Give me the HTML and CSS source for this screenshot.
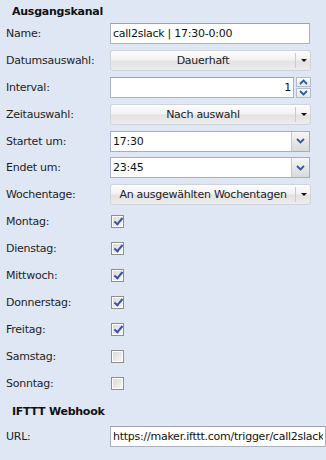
FILE: index.html
```html
<!DOCTYPE html>
<html lang="de">

<head>
    <meta charset="UTF-8">
    <meta name="viewport" content="width=device-width, initial-scale=1.0">
    <title>Ausgangskanal</title>
    <link rel="stylesheet" href="styles.css">
</head>

<body>
    <form class="panel">
        <h3 class="section-title">Ausgangskanal</h3>

        <div class="row">
            <label class="row-label">Name:</label>
            <input class="field" type="text" value="call2slack | 17:30-0:00">
        </div>

        <div class="row">
            <label class="row-label">Datumsauswahl:</label>
            <div class="dropdown" role="button"><span class="dropdown-text">Dauerhaft</span><span class="dropdown-arrow"></span></div>
        </div>

        <div class="row">
            <label class="row-label">Interval:</label>
            <div class="spinner">
                <input class="field spinner-input" type="text" value="1">
                <div class="spinner-btns">
                    <span class="spin spin-up">
                        <svg width="9" height="6" viewBox="0 0 9 6"><path d="M1 5 L4.5 1.5 L8 5" fill="none" stroke="#2f5aa8" stroke-width="1.8"/></svg>
                    </span>
                    <span class="spin spin-down">
                        <svg width="9" height="6" viewBox="0 0 9 6"><path d="M1 1 L4.5 4.5 L8 1" fill="none" stroke="#2f5aa8" stroke-width="1.8"/></svg>
                    </span>
                </div>
            </div>
        </div>

        <div class="row">
            <label class="row-label">Zeitauswahl:</label>
            <div class="dropdown" role="button"><span class="dropdown-text">Nach auswahl</span><span class="dropdown-arrow"></span></div>
        </div>

        <div class="row">
            <label class="row-label">Startet um:</label>
            <div class="combo">
                <input class="combo-input" type="text" value="17:30">
                <span class="combo-btn">
                    <svg width="9" height="6" viewBox="0 0 9 6"><path d="M1 1 L4.5 4.5 L8 1" fill="none" stroke="#2f5aa8" stroke-width="1.8"/></svg>
                </span>
            </div>
        </div>

        <div class="row">
            <label class="row-label">Endet um:</label>
            <div class="combo">
                <input class="combo-input" type="text" value="23:45">
                <span class="combo-btn">
                    <svg width="9" height="6" viewBox="0 0 9 6"><path d="M1 1 L4.5 4.5 L8 1" fill="none" stroke="#2f5aa8" stroke-width="1.8"/></svg>
                </span>
            </div>
        </div>

        <div class="row">
            <label class="row-label">Wochentage:</label>
            <div class="dropdown" role="button"><span class="dropdown-text">An ausgewählten Wochentagen</span><span class="dropdown-arrow"></span></div>
        </div>

        <div class="row">
            <label class="row-label">Montag:</label>
            <span class="check on"></span>
        </div>
        <div class="row">
            <label class="row-label">Dienstag:</label>
            <span class="check on"></span>
        </div>
        <div class="row">
            <label class="row-label">Mittwoch:</label>
            <span class="check on"></span>
        </div>
        <div class="row">
            <label class="row-label">Donnerstag:</label>
            <span class="check on"></span>
        </div>
        <div class="row">
            <label class="row-label">Freitag:</label>
            <span class="check on"></span>
        </div>
        <div class="row">
            <label class="row-label">Samstag:</label>
            <span class="check"></span>
        </div>
        <div class="row">
            <label class="row-label">Sonntag:</label>
            <span class="check"></span>
        </div>

        <h3 class="section-title section-title-2">IFTTT Webhook</h3>

        <div class="row">
            <label class="row-label">URL:</label>
            <input class="field field-wide" type="text" value="https://maker.ifttt.com/trigger/call2slack">
        </div>
    </form>
</body>

</html>
```

FILE: styles.css
```css
html,
body {
    margin: 0;
    padding: 0;
}

body {
    background: #dfe7f5;
    font-family: "DejaVu Sans", Verdana, sans-serif;
    font-size: 11px;
    letter-spacing: -0.25px;
    color: #1e1e1e;
    overflow: hidden;
    width: 326px;
    height: 460px;
}

.panel {
    padding-left: 6px;
}

/* 섹션 제목 */
.section-title {
    margin: 0;
    padding: 4px 0 0 6px;
    height: 16px;
    line-height: 16px;
    font-size: 11px;
    font-weight: bold;
    color: #111;
}

.section-title-2 {
    padding-top: 8px;
    height: 19px;
}

.row {
    display: flex;
    align-items: center;
    height: 26.9px;
}

.row-label {
    width: 104px;
    flex: none;
}

/* 입력칸 */
.field {
    box-sizing: border-box;
    width: 200px;
    height: 21px;
    margin: 0;
    padding: 0 2px;
    border: 1px solid #a9b1c2;
    border-top-color: #9aa3b6;
    background: #fff;
    font-family: inherit;
    font-size: 11px;
    letter-spacing: inherit;
    color: #111;
    outline: none;
}

.field-wide {
    width: 240px;
}

/* 드롭다운 버튼 */
.dropdown {
    box-sizing: border-box;
    display: flex;
    align-items: center;
    width: 201px;
    height: 21px;
    border: 1px solid #cfd3da;
    border-radius: 3px;
    background: linear-gradient(#fdfdfd 0%, #f2f2f2 45%, #e3e3e3 55%, #ececec 100%);
    color: #222;
    cursor: pointer;
}

.dropdown-text {
    flex: 1;
    text-align: center;
    border-right: 1px solid #c9ccd2;
    height: 15px;
    line-height: 15px;
}

.dropdown-arrow {
    width: 14px;
    height: 15px;
    position: relative;
}

.dropdown-arrow::after {
    content: "";
    position: absolute;
    left: 5px;
    top: 6px;
    border-top: 3px solid #111;
    border-left: 3px solid transparent;
    border-right: 3px solid transparent;
}

/* 숫자 스피너 */
.spinner {
    display: flex;
    align-items: center;
    gap: 2px;
}

.spinner-input {
    width: 184px;
    text-align: right;
}

.spinner-btns {
    display: flex;
    flex-direction: column;
    gap: 1px;
}

.spin {
    box-sizing: border-box;
    display: flex;
    align-items: center;
    justify-content: center;
    width: 15px;
    height: 10px;
    border: 1px solid #b5bdcc;
    background: linear-gradient(#fbfbfb, #e6e8ec);
}

/* 시간 콤보 */
.combo {
    box-sizing: border-box;
    display: flex;
    width: 200px;
    height: 21px;
    border: 1px solid #a4adc2;
    background: #fff;
}

.combo-input {
    flex: 1;
    min-width: 0;
    border: none;
    margin: 0;
    padding: 0 2px;
    font-family: inherit;
    font-size: 11px;
    letter-spacing: inherit;
    color: #111;
    outline: none;
    background: transparent;
}

.combo-btn {
    width: 17px;
    display: flex;
    align-items: center;
    justify-content: center;
    border-left: 1px solid #c3c8d2;
    background: linear-gradient(#f6f6f6, #d9dadd);
}

/* 체크박스 */
.check {
    box-sizing: border-box;
    width: 13px;
    height: 13px;
    margin-left: 1px;
    border: 1px solid #8f8f8f;
    box-shadow: inset 0 0 0 1px #fff;
    background: linear-gradient(135deg, #d8d8d8, #f7f7f7);
    position: relative;
}

.check.on::after {
    content: "";
    position: absolute;
    left: 4px;
    top: 0;
    width: 3px;
    height: 7px;
    border-right: 2px solid #3a52a6;
    border-bottom: 2px solid #3a52a6;
    transform: rotate(40deg);
}
```
